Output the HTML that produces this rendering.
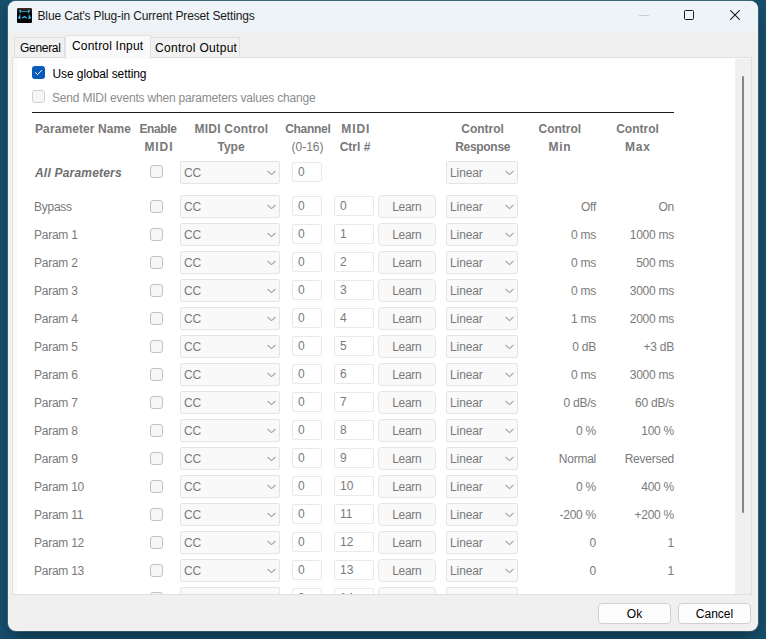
<!DOCTYPE html>
<html><head><meta charset="utf-8">
<style>
html,body{margin:0;padding:0;}
body{width:766px;height:639px;overflow:hidden;position:relative;background:#164e6c;font-family:"Liberation Sans",sans-serif;font-size:12px;}
.shadow{position:absolute;left:6px;top:2px;width:754px;height:634px;border-radius:10px;background:#113d55;filter:blur(2px);}
.win{position:absolute;left:8px;top:1px;width:750px;height:630px;background:#f0f0f0;border-radius:8px;overflow:hidden;box-shadow:0 0 0 1px rgba(150,160,165,0.3), 0 8px 16px -4px rgba(0,10,20,0.5);}
.title{position:absolute;left:0;top:0;width:750px;height:30px;background:#edf3f7;}
.abs{position:absolute;}
.t{position:absolute;white-space:nowrap;line-height:14px;}
.tab{position:absolute;background:#f1f1f1;border:1px solid #dfdfdf;border-bottom:none;box-sizing:border-box;}
.panel{position:absolute;background:#fff;border:1px solid #e0e0e0;box-sizing:border-box;overflow:hidden;}
.content{position:absolute;width:766px;height:639px;}
.cb{position:absolute;width:11px;height:11px;border:1px solid #c2c2c2;border-radius:3px;background:#f6f6f6;}
.dd{position:absolute;height:21px;border:1px solid #e4e4e4;border-radius:2px;background:#f9f9f9;color:#7a7a7a;}
.dd span{position:absolute;left:3px;top:4px;line-height:14px;letter-spacing:-0.1px}
.dd .chev{position:absolute;right:3.5px;top:8px;}
.in{position:absolute;height:18px;border:1px solid #e9e9e9;border-radius:2px;background:#fff;color:#7a7a7a;}
.in span{position:absolute;left:5px;top:2px;line-height:14px;}
.btn{position:absolute;height:21px;border:1px solid #e6e6e6;border-radius:4px;background:#f9f9f9;color:#7a7a7a;text-align:center;line-height:14px;box-sizing:content-box;padding-top:0}
.btn b{font-weight:normal;position:absolute;left:0;right:0;top:4px;}
.pn{left:34px;color:#7a7a7a;letter-spacing:-0.25px}
.r{color:#7a7a7a;text-align:right;letter-spacing:-0.25px}
.hd{position:absolute;white-space:nowrap;font-weight:bold;color:#787878;line-height:14px;}
.c{text-align:center;}
</style></head><body>
<div class="win">
  <div class="title"></div>
  <svg class="abs" style="left:9px;top:7px" width="15" height="15" viewBox="0 0 15 15">
    <defs><linearGradient id="ig" x1="0" y1="0" x2="0" y2="1"><stop offset="0" stop-color="#3b2d25"/><stop offset="0.35" stop-color="#050505"/><stop offset="1" stop-color="#000"/></linearGradient></defs>
    <rect x="0" y="0" width="15" height="15" rx="1.2" fill="url(#ig)"/>
    <path d="M2 2 L4.2 2.2 L4.5 4.2 L3 5 Z M13 2 L10.8 2.2 L10.5 4.2 L12 5 Z" fill="#3ab8f0"/>
    <path d="M5 3.2 H10 V4 H5 Z" fill="#3ab8f0"/>
    <path d="M3.6 4.6 L3.2 6 L0.8 10 L3.6 11.5 L3.3 6.5 Z M11.4 4.6 L11.8 6 L14.2 10 L11.4 11.5 L11.7 6.5 Z" fill="#3ab8f0"/>
    <path d="M4.5 9.8 L6.5 8.6 L7.5 7.8 L8.5 8.6 L10.5 9.8 L9.5 10.5 L7.5 9.6 L5.5 10.5 Z" fill="#3ab8f0"/>
  </svg>
  <div class="t" style="left:29.5px;top:8px;color:#1a1a1a;letter-spacing:-0.14px">Blue Cat's Plug-in Current Preset Settings</div>
  <div class="abs" style="left:631px;top:14px;width:10px;height:1px;background:#c8cdd1"></div>
  <div class="abs" style="left:676px;top:9px;width:8px;height:8px;border:1px solid #1a1a1a;border-radius:1.5px"></div>
  <svg class="abs" style="left:722px;top:9px" width="10" height="10" viewBox="0 0 10 10"><path d="M0.3 0.3 L9.7 9.7 M9.7 0.3 L0.3 9.7" stroke="#1a1a1a" stroke-width="1.05"/></svg>
  <div class="tab" style="left:6px;top:36px;width:51px;height:21px"></div>
  <div class="tab" style="left:142px;top:36px;width:90px;height:21px"></div>
  <div class="tab" style="left:57px;top:34px;width:86px;height:24px;background:#f9f9f9;border-color:#e2e2e2;z-index:2"></div>
  <div class="t" style="left:12px;top:40px;color:#000;letter-spacing:-0.3px">General</div>
  <div class="t" style="left:64px;top:38px;color:#000;z-index:3;letter-spacing:0.2px">Control Input</div>
  <div class="t" style="left:147px;top:40px;color:#000;letter-spacing:0.3px">Control Output</div>
  <div class="panel" style="left:4px;top:56px;width:740px;height:538px">
    <div class="content" style="left:-13px;top:-58px">
      <div class="abs" style="left:13px;top:58px;width:4px;height:536px;background:#f8f8f8"></div>
      <div class="abs" style="left:13px;top:58px;width:738px;height:1px;background:#fafafa"></div>
      <div class="abs" style="left:32px;top:66px;width:13px;height:13px;border-radius:3px;background:#0a5ab9"></div>
      <svg class="abs" style="left:32px;top:66px" width="13" height="13" viewBox="0 0 13 13"><path d="M3.1 6.3 L5.5 8.6 L10 4.1" stroke="#fff" stroke-width="0.95" fill="none"/></svg>
      <div class="t" style="left:52.5px;top:67px;color:#000;letter-spacing:-0.08px">Use global setting</div>
      <div class="cb" style="left:32px;top:90px;border-color:#d0d0d0;background:#f7f7f7"></div>
      <div class="t" style="left:52px;top:91px;color:#8c8c8c;letter-spacing:-0.19px">Send MIDI events when parameters values change</div>
      <div class="abs" style="left:32px;top:112px;width:642px;height:1px;background:#1a1a1a"></div>
      <div class="hd" style="left:35px;top:122px;letter-spacing:0.1px">Parameter Name</div>
      <div class="hd" style="left:98.19999999999999px;width:120px;text-align:center;top:122px;letter-spacing:-0.35px;text-indent:-0.35px">Enable</div>
      <div class="hd" style="left:98.5px;width:120px;text-align:center;top:140px;letter-spacing:0.9px;text-indent:0.9px">MIDI</div>
      <div class="hd" style="left:171.4px;width:120px;text-align:center;top:122px;letter-spacing:0.2px;text-indent:0.2px">MIDI Control</div>
      <div class="hd" style="left:171px;width:120px;text-align:center;top:140px;letter-spacing:0px;text-indent:0px">Type</div>
      <div class="hd" style="left:248px;width:120px;text-align:center;top:122px;letter-spacing:-0.3px;text-indent:-0.3px">Channel</div>
      <div class="hd" style="left:247.5px;width:120px;text-align:center;top:140px;letter-spacing:0px;text-indent:0px;font-weight:normal">(0-16)</div>
      <div class="hd" style="left:295.3px;width:120px;text-align:center;top:122px;letter-spacing:0.9px;text-indent:0.9px">MIDI</div>
      <div class="hd" style="left:295px;width:120px;text-align:center;top:140px;letter-spacing:0px;text-indent:0px">Ctrl #</div>
      <div class="hd" style="left:422.6px;width:120px;text-align:center;top:122px;letter-spacing:0px;text-indent:0px">Control</div>
      <div class="hd" style="left:422.8px;width:120px;text-align:center;top:140px;letter-spacing:-0.3px;text-indent:-0.3px">Response</div>
      <div class="hd" style="left:499.79999999999995px;width:120px;text-align:center;top:122px;letter-spacing:0px;text-indent:0px">Control</div>
      <div class="hd" style="left:499.5px;width:120px;text-align:center;top:140px;letter-spacing:0.7px;text-indent:0.7px">Min</div>
      <div class="hd" style="left:577.5px;width:120px;text-align:center;top:122px;letter-spacing:0px;text-indent:0px">Control</div>
      <div class="hd" style="left:577.5px;width:120px;text-align:center;top:140px;letter-spacing:0.7px;text-indent:0.7px">Max</div>
      <div class="t" style="left:35px;top:166px;font-weight:bold;font-style:italic;color:#6f6f6f;letter-spacing:0.2px">All Parameters</div>
      <div class="cb" style="left:150px;top:165px"></div>
      <div class="dd" style="left:180px;top:161px;width:98px"><span>CC</span><svg class="chev" width="9" height="5" viewBox="0 0 9 5"><path d="M0.6 1 L4.5 4.6 L8.4 1" fill="none" stroke="#a4a4a4" stroke-width="1.1"/></svg></div>
      <div class="in" style="left:292px;top:162px;width:28px"><span>0</span></div>
      <div class="dd" style="left:446px;top:161px;width:70px"><span>Linear</span><svg class="chev" width="9" height="5" viewBox="0 0 9 5"><path d="M0.6 1 L4.5 4.6 L8.4 1" fill="none" stroke="#a4a4a4" stroke-width="1.1"/></svg></div>
      <div class="t pn" style="top:200px">Bypass</div>
<div class="cb" style="left:150px;top:200px"></div>
<div class="dd" style="left:180px;top:195px;width:98px"><span>CC</span><svg class="chev" width="9" height="5" viewBox="0 0 9 5"><path d="M0.6 1 L4.5 4.6 L8.4 1" fill="none" stroke="#a4a4a4" stroke-width="1.1"/></svg></div>
<div class="in" style="left:292px;top:196px;width:28px"><span>0</span></div>
<div class="in" style="left:334px;top:196px;width:38px"><span>0</span></div>
<div class="btn" style="left:378px;top:195px;width:56px"><b style="letter-spacing:-0.3px;text-indent:-0.3px">Learn</b></div>
<div class="dd" style="left:446px;top:195px;width:70px"><span>Linear</span><svg class="chev" width="9" height="5" viewBox="0 0 9 5"><path d="M0.6 1 L4.5 4.6 L8.4 1" fill="none" stroke="#a4a4a4" stroke-width="1.1"/></svg></div>
<div class="t r" style="right:170px;top:200px">Off</div>
<div class="t r" style="right:92px;top:200px">On</div>
<div class="t pn" style="top:228px">Param 1</div>
<div class="cb" style="left:150px;top:228px"></div>
<div class="dd" style="left:180px;top:223px;width:98px"><span>CC</span><svg class="chev" width="9" height="5" viewBox="0 0 9 5"><path d="M0.6 1 L4.5 4.6 L8.4 1" fill="none" stroke="#a4a4a4" stroke-width="1.1"/></svg></div>
<div class="in" style="left:292px;top:224px;width:28px"><span>0</span></div>
<div class="in" style="left:334px;top:224px;width:38px"><span>1</span></div>
<div class="btn" style="left:378px;top:223px;width:56px"><b style="letter-spacing:-0.3px;text-indent:-0.3px">Learn</b></div>
<div class="dd" style="left:446px;top:223px;width:70px"><span>Linear</span><svg class="chev" width="9" height="5" viewBox="0 0 9 5"><path d="M0.6 1 L4.5 4.6 L8.4 1" fill="none" stroke="#a4a4a4" stroke-width="1.1"/></svg></div>
<div class="t r" style="right:170px;top:228px">0 ms</div>
<div class="t r" style="right:92px;top:228px">1000 ms</div>
<div class="t pn" style="top:256px">Param 2</div>
<div class="cb" style="left:150px;top:256px"></div>
<div class="dd" style="left:180px;top:251px;width:98px"><span>CC</span><svg class="chev" width="9" height="5" viewBox="0 0 9 5"><path d="M0.6 1 L4.5 4.6 L8.4 1" fill="none" stroke="#a4a4a4" stroke-width="1.1"/></svg></div>
<div class="in" style="left:292px;top:252px;width:28px"><span>0</span></div>
<div class="in" style="left:334px;top:252px;width:38px"><span>2</span></div>
<div class="btn" style="left:378px;top:251px;width:56px"><b style="letter-spacing:-0.3px;text-indent:-0.3px">Learn</b></div>
<div class="dd" style="left:446px;top:251px;width:70px"><span>Linear</span><svg class="chev" width="9" height="5" viewBox="0 0 9 5"><path d="M0.6 1 L4.5 4.6 L8.4 1" fill="none" stroke="#a4a4a4" stroke-width="1.1"/></svg></div>
<div class="t r" style="right:170px;top:256px">0 ms</div>
<div class="t r" style="right:92px;top:256px">500 ms</div>
<div class="t pn" style="top:284px">Param 3</div>
<div class="cb" style="left:150px;top:284px"></div>
<div class="dd" style="left:180px;top:279px;width:98px"><span>CC</span><svg class="chev" width="9" height="5" viewBox="0 0 9 5"><path d="M0.6 1 L4.5 4.6 L8.4 1" fill="none" stroke="#a4a4a4" stroke-width="1.1"/></svg></div>
<div class="in" style="left:292px;top:280px;width:28px"><span>0</span></div>
<div class="in" style="left:334px;top:280px;width:38px"><span>3</span></div>
<div class="btn" style="left:378px;top:279px;width:56px"><b style="letter-spacing:-0.3px;text-indent:-0.3px">Learn</b></div>
<div class="dd" style="left:446px;top:279px;width:70px"><span>Linear</span><svg class="chev" width="9" height="5" viewBox="0 0 9 5"><path d="M0.6 1 L4.5 4.6 L8.4 1" fill="none" stroke="#a4a4a4" stroke-width="1.1"/></svg></div>
<div class="t r" style="right:170px;top:284px">0 ms</div>
<div class="t r" style="right:92px;top:284px">3000 ms</div>
<div class="t pn" style="top:312px">Param 4</div>
<div class="cb" style="left:150px;top:312px"></div>
<div class="dd" style="left:180px;top:307px;width:98px"><span>CC</span><svg class="chev" width="9" height="5" viewBox="0 0 9 5"><path d="M0.6 1 L4.5 4.6 L8.4 1" fill="none" stroke="#a4a4a4" stroke-width="1.1"/></svg></div>
<div class="in" style="left:292px;top:308px;width:28px"><span>0</span></div>
<div class="in" style="left:334px;top:308px;width:38px"><span>4</span></div>
<div class="btn" style="left:378px;top:307px;width:56px"><b style="letter-spacing:-0.3px;text-indent:-0.3px">Learn</b></div>
<div class="dd" style="left:446px;top:307px;width:70px"><span>Linear</span><svg class="chev" width="9" height="5" viewBox="0 0 9 5"><path d="M0.6 1 L4.5 4.6 L8.4 1" fill="none" stroke="#a4a4a4" stroke-width="1.1"/></svg></div>
<div class="t r" style="right:170px;top:312px">1 ms</div>
<div class="t r" style="right:92px;top:312px">2000 ms</div>
<div class="t pn" style="top:340px">Param 5</div>
<div class="cb" style="left:150px;top:340px"></div>
<div class="dd" style="left:180px;top:335px;width:98px"><span>CC</span><svg class="chev" width="9" height="5" viewBox="0 0 9 5"><path d="M0.6 1 L4.5 4.6 L8.4 1" fill="none" stroke="#a4a4a4" stroke-width="1.1"/></svg></div>
<div class="in" style="left:292px;top:336px;width:28px"><span>0</span></div>
<div class="in" style="left:334px;top:336px;width:38px"><span>5</span></div>
<div class="btn" style="left:378px;top:335px;width:56px"><b style="letter-spacing:-0.3px;text-indent:-0.3px">Learn</b></div>
<div class="dd" style="left:446px;top:335px;width:70px"><span>Linear</span><svg class="chev" width="9" height="5" viewBox="0 0 9 5"><path d="M0.6 1 L4.5 4.6 L8.4 1" fill="none" stroke="#a4a4a4" stroke-width="1.1"/></svg></div>
<div class="t r" style="right:170px;top:340px">0 dB</div>
<div class="t r" style="right:92px;top:340px">+3 dB</div>
<div class="t pn" style="top:368px">Param 6</div>
<div class="cb" style="left:150px;top:368px"></div>
<div class="dd" style="left:180px;top:363px;width:98px"><span>CC</span><svg class="chev" width="9" height="5" viewBox="0 0 9 5"><path d="M0.6 1 L4.5 4.6 L8.4 1" fill="none" stroke="#a4a4a4" stroke-width="1.1"/></svg></div>
<div class="in" style="left:292px;top:364px;width:28px"><span>0</span></div>
<div class="in" style="left:334px;top:364px;width:38px"><span>6</span></div>
<div class="btn" style="left:378px;top:363px;width:56px"><b style="letter-spacing:-0.3px;text-indent:-0.3px">Learn</b></div>
<div class="dd" style="left:446px;top:363px;width:70px"><span>Linear</span><svg class="chev" width="9" height="5" viewBox="0 0 9 5"><path d="M0.6 1 L4.5 4.6 L8.4 1" fill="none" stroke="#a4a4a4" stroke-width="1.1"/></svg></div>
<div class="t r" style="right:170px;top:368px">0 ms</div>
<div class="t r" style="right:92px;top:368px">3000 ms</div>
<div class="t pn" style="top:396px">Param 7</div>
<div class="cb" style="left:150px;top:396px"></div>
<div class="dd" style="left:180px;top:391px;width:98px"><span>CC</span><svg class="chev" width="9" height="5" viewBox="0 0 9 5"><path d="M0.6 1 L4.5 4.6 L8.4 1" fill="none" stroke="#a4a4a4" stroke-width="1.1"/></svg></div>
<div class="in" style="left:292px;top:392px;width:28px"><span>0</span></div>
<div class="in" style="left:334px;top:392px;width:38px"><span>7</span></div>
<div class="btn" style="left:378px;top:391px;width:56px"><b style="letter-spacing:-0.3px;text-indent:-0.3px">Learn</b></div>
<div class="dd" style="left:446px;top:391px;width:70px"><span>Linear</span><svg class="chev" width="9" height="5" viewBox="0 0 9 5"><path d="M0.6 1 L4.5 4.6 L8.4 1" fill="none" stroke="#a4a4a4" stroke-width="1.1"/></svg></div>
<div class="t r" style="right:170px;top:396px">0 dB/s</div>
<div class="t r" style="right:92px;top:396px">60 dB/s</div>
<div class="t pn" style="top:424px">Param 8</div>
<div class="cb" style="left:150px;top:424px"></div>
<div class="dd" style="left:180px;top:419px;width:98px"><span>CC</span><svg class="chev" width="9" height="5" viewBox="0 0 9 5"><path d="M0.6 1 L4.5 4.6 L8.4 1" fill="none" stroke="#a4a4a4" stroke-width="1.1"/></svg></div>
<div class="in" style="left:292px;top:420px;width:28px"><span>0</span></div>
<div class="in" style="left:334px;top:420px;width:38px"><span>8</span></div>
<div class="btn" style="left:378px;top:419px;width:56px"><b style="letter-spacing:-0.3px;text-indent:-0.3px">Learn</b></div>
<div class="dd" style="left:446px;top:419px;width:70px"><span>Linear</span><svg class="chev" width="9" height="5" viewBox="0 0 9 5"><path d="M0.6 1 L4.5 4.6 L8.4 1" fill="none" stroke="#a4a4a4" stroke-width="1.1"/></svg></div>
<div class="t r" style="right:170px;top:424px">0 %</div>
<div class="t r" style="right:92px;top:424px">100 %</div>
<div class="t pn" style="top:452px">Param 9</div>
<div class="cb" style="left:150px;top:452px"></div>
<div class="dd" style="left:180px;top:447px;width:98px"><span>CC</span><svg class="chev" width="9" height="5" viewBox="0 0 9 5"><path d="M0.6 1 L4.5 4.6 L8.4 1" fill="none" stroke="#a4a4a4" stroke-width="1.1"/></svg></div>
<div class="in" style="left:292px;top:448px;width:28px"><span>0</span></div>
<div class="in" style="left:334px;top:448px;width:38px"><span>9</span></div>
<div class="btn" style="left:378px;top:447px;width:56px"><b style="letter-spacing:-0.3px;text-indent:-0.3px">Learn</b></div>
<div class="dd" style="left:446px;top:447px;width:70px"><span>Linear</span><svg class="chev" width="9" height="5" viewBox="0 0 9 5"><path d="M0.6 1 L4.5 4.6 L8.4 1" fill="none" stroke="#a4a4a4" stroke-width="1.1"/></svg></div>
<div class="t r" style="right:170px;top:452px">Normal</div>
<div class="t r" style="right:92px;top:452px">Reversed</div>
<div class="t pn" style="top:480px">Param 10</div>
<div class="cb" style="left:150px;top:480px"></div>
<div class="dd" style="left:180px;top:475px;width:98px"><span>CC</span><svg class="chev" width="9" height="5" viewBox="0 0 9 5"><path d="M0.6 1 L4.5 4.6 L8.4 1" fill="none" stroke="#a4a4a4" stroke-width="1.1"/></svg></div>
<div class="in" style="left:292px;top:476px;width:28px"><span>0</span></div>
<div class="in" style="left:334px;top:476px;width:38px"><span>10</span></div>
<div class="btn" style="left:378px;top:475px;width:56px"><b style="letter-spacing:-0.3px;text-indent:-0.3px">Learn</b></div>
<div class="dd" style="left:446px;top:475px;width:70px"><span>Linear</span><svg class="chev" width="9" height="5" viewBox="0 0 9 5"><path d="M0.6 1 L4.5 4.6 L8.4 1" fill="none" stroke="#a4a4a4" stroke-width="1.1"/></svg></div>
<div class="t r" style="right:170px;top:480px">0 %</div>
<div class="t r" style="right:92px;top:480px">400 %</div>
<div class="t pn" style="top:508px">Param 11</div>
<div class="cb" style="left:150px;top:508px"></div>
<div class="dd" style="left:180px;top:503px;width:98px"><span>CC</span><svg class="chev" width="9" height="5" viewBox="0 0 9 5"><path d="M0.6 1 L4.5 4.6 L8.4 1" fill="none" stroke="#a4a4a4" stroke-width="1.1"/></svg></div>
<div class="in" style="left:292px;top:504px;width:28px"><span>0</span></div>
<div class="in" style="left:334px;top:504px;width:38px"><span>11</span></div>
<div class="btn" style="left:378px;top:503px;width:56px"><b style="letter-spacing:-0.3px;text-indent:-0.3px">Learn</b></div>
<div class="dd" style="left:446px;top:503px;width:70px"><span>Linear</span><svg class="chev" width="9" height="5" viewBox="0 0 9 5"><path d="M0.6 1 L4.5 4.6 L8.4 1" fill="none" stroke="#a4a4a4" stroke-width="1.1"/></svg></div>
<div class="t r" style="right:170px;top:508px">-200 %</div>
<div class="t r" style="right:92px;top:508px">+200 %</div>
<div class="t pn" style="top:536px">Param 12</div>
<div class="cb" style="left:150px;top:536px"></div>
<div class="dd" style="left:180px;top:531px;width:98px"><span>CC</span><svg class="chev" width="9" height="5" viewBox="0 0 9 5"><path d="M0.6 1 L4.5 4.6 L8.4 1" fill="none" stroke="#a4a4a4" stroke-width="1.1"/></svg></div>
<div class="in" style="left:292px;top:532px;width:28px"><span>0</span></div>
<div class="in" style="left:334px;top:532px;width:38px"><span>12</span></div>
<div class="btn" style="left:378px;top:531px;width:56px"><b style="letter-spacing:-0.3px;text-indent:-0.3px">Learn</b></div>
<div class="dd" style="left:446px;top:531px;width:70px"><span>Linear</span><svg class="chev" width="9" height="5" viewBox="0 0 9 5"><path d="M0.6 1 L4.5 4.6 L8.4 1" fill="none" stroke="#a4a4a4" stroke-width="1.1"/></svg></div>
<div class="t r" style="right:170px;top:536px">0</div>
<div class="t r" style="right:92px;top:536px">1</div>
<div class="t pn" style="top:564px">Param 13</div>
<div class="cb" style="left:150px;top:564px"></div>
<div class="dd" style="left:180px;top:559px;width:98px"><span>CC</span><svg class="chev" width="9" height="5" viewBox="0 0 9 5"><path d="M0.6 1 L4.5 4.6 L8.4 1" fill="none" stroke="#a4a4a4" stroke-width="1.1"/></svg></div>
<div class="in" style="left:292px;top:560px;width:28px"><span>0</span></div>
<div class="in" style="left:334px;top:560px;width:38px"><span>13</span></div>
<div class="btn" style="left:378px;top:559px;width:56px"><b style="letter-spacing:-0.3px;text-indent:-0.3px">Learn</b></div>
<div class="dd" style="left:446px;top:559px;width:70px"><span>Linear</span><svg class="chev" width="9" height="5" viewBox="0 0 9 5"><path d="M0.6 1 L4.5 4.6 L8.4 1" fill="none" stroke="#a4a4a4" stroke-width="1.1"/></svg></div>
<div class="t r" style="right:170px;top:564px">0</div>
<div class="t r" style="right:92px;top:564px">1</div>
<div class="t pn" style="top:592px">Param 14</div>
<div class="cb" style="left:150px;top:592px"></div>
<div class="dd" style="left:180px;top:587px;width:98px"><span>CC</span><svg class="chev" width="9" height="5" viewBox="0 0 9 5"><path d="M0.6 1 L4.5 4.6 L8.4 1" fill="none" stroke="#a4a4a4" stroke-width="1.1"/></svg></div>
<div class="in" style="left:292px;top:588px;width:28px"><span>0</span></div>
<div class="in" style="left:334px;top:588px;width:38px"><span>14</span></div>
<div class="btn" style="left:378px;top:587px;width:56px"><b style="letter-spacing:-0.3px;text-indent:-0.3px">Learn</b></div>
<div class="dd" style="left:446px;top:587px;width:70px"><span>Linear</span><svg class="chev" width="9" height="5" viewBox="0 0 9 5"><path d="M0.6 1 L4.5 4.6 L8.4 1" fill="none" stroke="#a4a4a4" stroke-width="1.1"/></svg></div>
<div class="t r" style="right:170px;top:592px">0</div>
<div class="t r" style="right:92px;top:592px">1</div>
      <div class="abs" style="left:735px;top:59px;width:16px;height:535px;background:#f0f0f0"></div>
      <div class="abs" style="left:742px;top:76px;width:2px;height:437px;background:#858585;border-radius:1px"></div>
    </div>
  </div>
  <div class="abs" style="left:590px;top:602px;width:71px;height:19px;border:1px solid #d0d0d0;border-radius:4px;background:#fdfdfd;color:#000"><div class="t" style="left:0;right:0;top:3px;text-align:center">Ok</div></div>
  <div class="abs" style="left:670px;top:602px;width:71px;height:19px;border:1px solid #d0d0d0;border-radius:4px;background:#fdfdfd;color:#000"><div class="t" style="left:0;right:0;top:3px;text-align:center">Cancel</div></div>
</div>
</body></html>
